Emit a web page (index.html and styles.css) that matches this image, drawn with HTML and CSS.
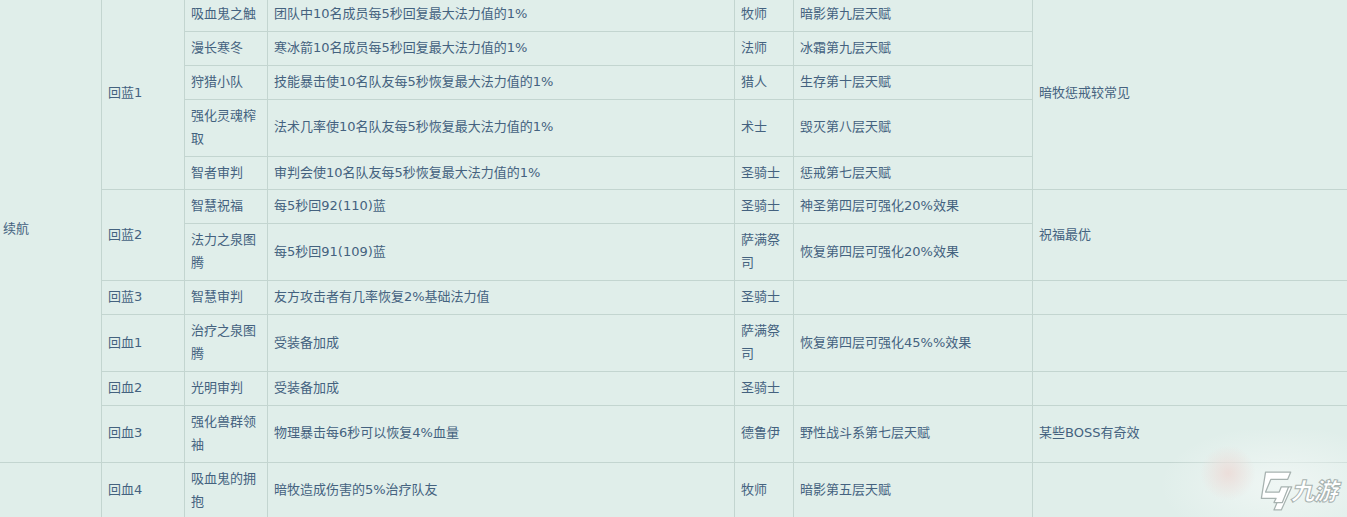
FILE: index.html
```html
<!DOCTYPE html>
<html lang="zh">
<head>
<meta charset="utf-8">
<link rel="stylesheet" href="styles.css">
</head>
<body>
<div class="page">
<table class="grid">
  <colgroup>
    <col class="c1"><col class="c2"><col class="c3"><col class="c4"><col class="c5"><col class="c6"><col class="c7">
  </colgroup>
  <tbody>
    <tr>
      <td rowspan="11">续航</td>
      <td rowspan="5">回蓝1</td>
      <td>吸血鬼之触</td>
      <td>团队中10名成员每5秒回复最大法力值的1%</td>
      <td>牧师</td>
      <td>暗影第九层天赋</td>
      <td rowspan="5">暗牧惩戒较常见</td>
    </tr>
    <tr>
      <td>漫长寒冬</td>
      <td>寒冰箭10名成员每5秒回复最大法力值的1%</td>
      <td>法师</td>
      <td>冰霜第九层天赋</td>
    </tr>
    <tr>
      <td>狩猎小队</td>
      <td>技能暴击使10名队友每5秒恢复最大法力值的1%</td>
      <td>猎人</td>
      <td>生存第十层天赋</td>
    </tr>
    <tr>
      <td>强化灵魂榨取</td>
      <td>法术几率使10名队友每5秒恢复最大法力值的1%</td>
      <td>术士</td>
      <td>毁灭第八层天赋</td>
    </tr>
    <tr>
      <td>智者审判</td>
      <td>审判会使10名队友每5秒恢复最大法力值的1%</td>
      <td>圣骑士</td>
      <td>惩戒第七层天赋</td>
    </tr>
    <tr>
      <td rowspan="2">回蓝2</td>
      <td>智慧祝福</td>
      <td>每5秒回92(110)蓝</td>
      <td>圣骑士</td>
      <td>神圣第四层可强化20%效果</td>
      <td rowspan="2">祝福最优</td>
    </tr>
    <tr>
      <td>法力之泉图腾</td>
      <td>每5秒回91(109)蓝</td>
      <td>萨满祭司</td>
      <td>恢复第四层可强化20%效果</td>
    </tr>
    <tr>
      <td>回蓝3</td>
      <td>智慧审判</td>
      <td>友方攻击者有几率恢复2%基础法力值</td>
      <td>圣骑士</td>
      <td></td>
      <td></td>
    </tr>
    <tr>
      <td>回血1</td>
      <td>治疗之泉图腾</td>
      <td>受装备加成</td>
      <td>萨满祭司</td>
      <td>恢复第四层可强化45%%效果</td>
      <td></td>
    </tr>
    <tr>
      <td>回血2</td>
      <td>光明审判</td>
      <td>受装备加成</td>
      <td>圣骑士</td>
      <td></td>
      <td></td>
    </tr>
    <tr>
      <td>回血3</td>
      <td>强化兽群领袖</td>
      <td>物理暴击每6秒可以恢复4%血量</td>
      <td>德鲁伊</td>
      <td>野性战斗系第七层天赋</td>
      <td>某些BOSS有奇效</td>
    </tr>
    <tr>
      <td rowspan="2"></td>
      <td>回血4</td>
      <td>吸血鬼的拥抱</td>
      <td>暗牧造成伤害的5%治疗队友</td>
      <td>牧师</td>
      <td>暗影第五层天赋</td>
      <td></td>
    </tr>
  </tbody>
</table>
<div class="watermark">
  <div class="glow"></div>
  <div class="blob"></div>
  <svg class="logo-mark" width="38" height="42" viewBox="0 0 36 40">
    <path d="M9 2 L33 2 L30 9 L14 9 L9 21 L22 21 L24 16 L31 16 L25 31 L17 31 L19 27 L5 27 Z M25 31 L31 16 L34 16 L24 38 L17 38 L20 31 Z" fill="#ffffff" stroke="#a7b2b0" stroke-width="1.2" stroke-linejoin="round"/>
  </svg>
  <span class="logo-text">九游</span>
</div>
</div>
</body>
</html>
```
FILE: styles.css
```css
html, body {
  margin: 0;
  padding: 0;
  background: #e0eeea;
  overflow: hidden;
}
.page {
  position: relative;
  width: 1347px;
  height: 517px;
  overflow: hidden;
  background: #e0eeea;
}
.grid {
  border-collapse: collapse;
  table-layout: fixed;
  width: 1420px;
  margin: -3px 0 0 -4px;
  font-family: "DejaVu Sans", "Noto Sans CJK SC", sans-serif;
  font-size: 13px;
  line-height: 22.9px;
  color: #44627f;
}
.grid td {
  border: 1px solid #c3d5d0;
  padding: 5px 6px;
  vertical-align: middle;
  text-align: left;
  word-break: break-all;
}
.c1 { width: 105px; }
.c2 { width: 83px; }
.c3 { width: 83px; }
.c4 { width: 467px; }
.c5 { width: 59px; }
.c6 { width: 239px; }
.c7 { width: 384px; }
.watermark {
  position: absolute;
  left: 1160px;
  top: 430px;
  width: 187px;
  height: 87px;
  pointer-events: none;
}
.glow {
  position: absolute;
  inset: 0;
  background: radial-gradient(ellipse 120px 60px at 120px 55px, rgba(241, 247, 245, 0.9), rgba(241, 247, 245, 0) 100%);
}
.blob {
  position: absolute;
  left: 40px;
  top: 15px;
  width: 56px;
  height: 56px;
  border-radius: 50%;
  background: radial-gradient(circle, rgba(236, 218, 214, 0.85) 0%, rgba(236, 218, 214, 0) 70%);
}
.logo-mark {
  position: absolute;
  left: 96px;
  top: 40px;
}
.logo-text {
  position: absolute;
  left: 133px;
  top: 46px;
  font-family: "Noto Sans CJK SC", sans-serif;
  font-weight: 900;
  font-size: 24px;
  line-height: 28px;
  color: #ffffff;
  -webkit-text-stroke: 1px #a7b2b0;
  transform: skewX(-14deg);
  letter-spacing: -1px;
}
```
